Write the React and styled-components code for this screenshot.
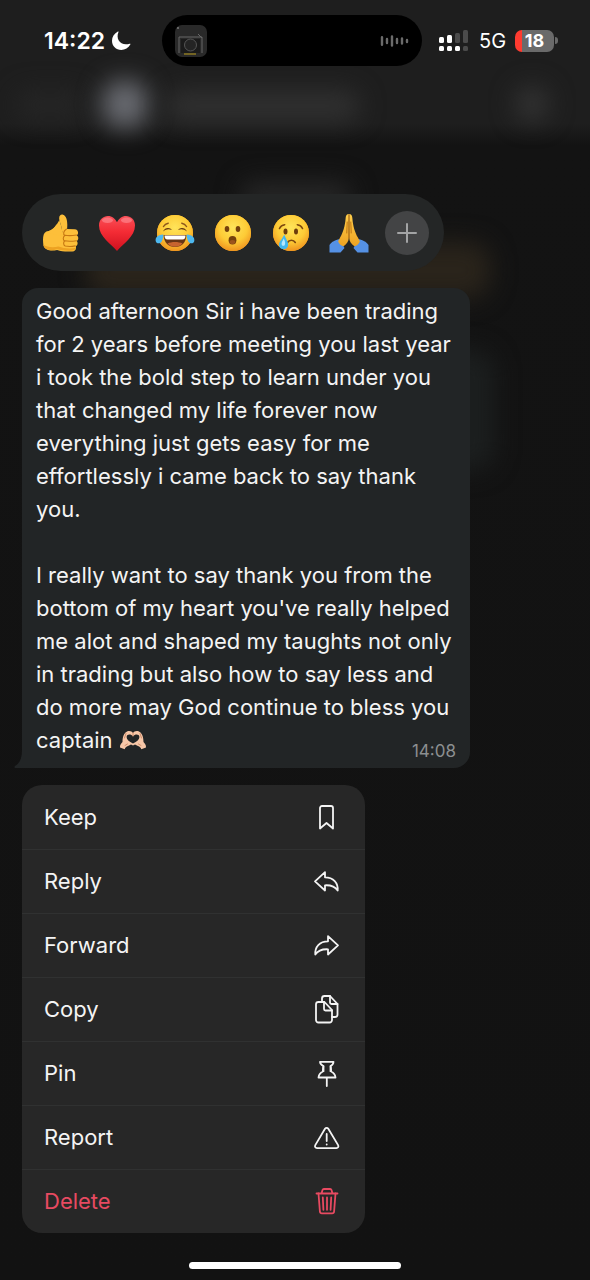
import React from "react";
import styled, { createGlobalStyle } from "styled-components";

const GlobalStyle = createGlobalStyle`
  *, *::before, *::after { box-sizing: border-box; }
  body {
    margin: 0;
    background: #121212;
    color: #f4f4f4;
    font-family: Inter, "Liberation Sans", sans-serif;
  }
  button { font: inherit; color: inherit; border: 0; padding: 0; margin: 0; background: none; cursor: pointer; }
  svg { display: block; flex: none; }
`;

const Screen = styled.div`
  position: relative;
  isolation: isolate;
  overflow: hidden;
  min-height: 100vh;
  display: flex;
  flex-direction: column;
`;

/* Dimmed, blurred chat that sits behind the open menu */
const Backdrop = styled.div`
  position: absolute;
  inset: 0;
  z-index: -1;
  background: linear-gradient(#1e1e1e 0, #1e1e1e 124px, #131313 146px, #121212 100%);
`;

const Haze = styled.span`
  position: absolute;
  left: ${(p) => p.$x}px;
  top: ${(p) => p.$y}px;
  width: ${(p) => p.$w}px;
  height: ${(p) => p.$h}px;
  border-radius: 20px;
  background: ${(p) => p.$color};
  filter: blur(12px);
`;

const StatusBar = styled.header`
  display: grid;
  grid-template-columns: 1fr 260px 1fr;
  align-items: center;
  padding: 15px 6px 0 0;
`;

const StatusLeft = styled.div`
  display: flex;
  align-items: center;
  gap: 6px;
  padding-left: 44px;
  font-size: 23px;
  line-height: 28px;
  font-weight: 600;
  color: #fff;
`;

const StatusRight = styled.div`
  display: flex;
  align-items: center;
  gap: 9px;
  padding-left: 17px;
  font-size: 20px;
  line-height: 28px;
  color: #fff;
`;

const Island = styled.div`
  height: 51px;
  display: flex;
  align-items: center;
  justify-content: space-between;
  padding: 0 13px;
  border-radius: 26px;
  background: #000;
`;

const Battery = styled.div`
  display: flex;
  align-items: center;
  gap: 1px;
`;

const BatteryBody = styled.div`
  width: 39px;
  height: 22px;
  border-radius: 7px;
  background: linear-gradient(90deg, #ff3b30 7px, #6a6a6a 7px);
  font-size: 18px;
  line-height: 22px;
  font-weight: 700;
  text-align: center;
`;

const BatteryTip = styled.div`
  width: 3px;
  height: 7px;
  border-radius: 0 3px 3px 0;
  background: #6a6a6a;
`;

const Content = styled.main`
  display: flex;
  flex-direction: column;
  align-items: flex-start;
  gap: 17px;
  padding: 128px 22px 24px;
`;

const ReactionBar = styled.div`
  display: flex;
  align-items: center;
  gap: 14px;
  height: 77px;
  padding: 0 15px;
  border-radius: 39px;
  background: #242626;
`;

const ReactionButton = styled.button`
  width: 44px;
  height: 44px;
  display: grid;
  place-items: center;
  border-radius: 50%;
  background: ${(p) => (p.$filled ? "#434445" : "none")};
`;

const Bubble = styled.article`
  position: relative;
  width: 100%;
  max-width: 448px;
  padding: 7px 14px 8px;
  border-radius: 16px 16px 16px 0;
  background: #222526;
`;

const BubbleTail = styled.svg`
  position: absolute;
  left: -8px;
  bottom: 0;
`;

const Message = styled.p`
  display: flow-root;
  margin: 0;
  font-size: 22px;
  line-height: 33px;
  white-space: pre-line;

  svg { display: inline-block; vertical-align: -2px; }
`;

const Time = styled.time`
  float: right;
  margin-top: 18px;
  font-size: 17px;
  line-height: 18px;
  color: #8c8f90;
`;

const Menu = styled.div`
  width: 100%;
  max-width: 343px;
  overflow: hidden;
  border-radius: 20px;
  background: #272727;
`;

const MenuItem = styled.button`
  width: 100%;
  height: 64px;
  display: flex;
  align-items: center;
  justify-content: space-between;
  padding: 0 24px 0 22px;
  font-size: 22px;
  line-height: 28px;
  text-align: left;
  color: ${(p) => (p.$danger ? "#e84a61" : "#f4f4f4")};

  & + & { box-shadow: inset 0 1px #303131; }
`;

const HomeIndicator = styled.div`
  width: 212px;
  height: 7px;
  margin: auto auto 11px;
  border-radius: 4px;
  background: #fff;
`;

const LineIcon = ({ children }) => (
  <svg width="30" height="30" viewBox="0 0 30 30" fill="none" stroke="currentColor" strokeWidth="1.8" strokeLinejoin="round" strokeLinecap="round" aria-hidden="true">
    {children}
  </svg>
);

const arrow = "M14 6.2 4 15.3l10 9.2v-5.2c5.500-.3 9.700.7 12.700 5.200C27.200 17 22.500 11.300 14 11.300Z";

const menuItems = [
  { label: "Keep", icon: <path d="M11 4h9a2 2 0 0 1 2 2v20.500l-6.500-5.500L9 26.500V6a2 2 0 0 1 2-2Z" /> },
  { label: "Reply", icon: <path d={arrow} /> },
  { label: "Forward", icon: <path d={arrow} transform="translate(31 0) scale(-1 1)" /> },
  {
    label: "Copy",
    icon: (
      <>
        <path d="M7.500 8h6l7.500 8V26a2.500 2.500 0 0 1-2.500 2.500h-11A2.500 2.500 0 0 1 5 26V10.500A2.500 2.500 0 0 1 7.500 8Z" />
        <path d="M13 8v7a1.500 1.500 0 0 0 1.500 1.500h6.500" />
        <path d="M11 8V4.500A2.500 2.500 0 0 1 13.500 2H19l7.500 8V20.500a2.500 2.500 0 0 1-2.500 2.500H21" />
        <path d="M19 2v6.500a1.500 1.500 0 0 0 1.500 1.500h6" />
      </>
    ),
  },
  {
    label: "Pin",
    icon: (
      <>
        <path d="M9 3.800h13.500c0 2-1 3.200-2.800 4.200l.5 5.500c2.500 1.200 4 3.200 4.300 6H7.500c.3-2.800 1.800-4.800 4.300-6L12.300 8C10.300 7 9 5.800 9 3.800Z" />
        <path d="M12.500 8.200v5M19.500 8.200v5M15.800 19.800V28" />
      </>
    ),
  },
  {
    label: "Report",
    icon: (
      <>
        <path d="M14 6.800a2 2 0 0 1 3.300 0l9.800 16.300c.8 1.500 0 3-1.700 3H6c-1.700 0-2.500-1.500-1.700-3Z" />
        <path d="M15.700 12v7M15.700 22.300v.2" />
      </>
    ),
  },
  {
    label: "Delete",
    danger: true,
    icon: (
      <>
        <path d="M5.500 7.500H26.500M10.500 7.500 11.500 4a1.500 1.500 0 0 1 1.400-1h6.200a1.500 1.500 0 0 1 1.400 1l1 3.500" />
        <path d="m7.500 7.500 1.400 18a2 2 0 0 0 2 1.800h10.200a2 2 0 0 0 2-1.800l1.400-18" />
        <path d="m11.800 11.500.6 12.300M16 11.500v12.300M20.200 11.500l-.6 12.300" />
      </>
    ),
  },
];

const Emoji = ({ children }) => (
  <svg width="40" height="40" viewBox="0 0 40 40" aria-hidden="true">{children}</svg>
);

const Face = () => (
  <>
    <circle cx="20" cy="20" r="18" fill="#f5a91c" />
    <circle cx="20" cy="20" r="18" fill="url(#faceShade)" />
  </>
);

const reactions = [
  {
    label: "Thumbs up",
    art: (
      <g transform="translate(2 0)">
        <path d="M21 20c.7-4.500-1.700-9-2.600-13-1-3.800 1.200-6 3.600-5.300 4.500 1.400 4.600 8.800 4.100 14.300l7.500.3c3.800.2 4.500 4.500 2 6 2.200 1.300 2.200 4.500.2 5.700 1.400 1.600.9 4.300-1 5.200.8 2.500-.5 5-3.500 5.200-5.300.4-10.800.2-15.200-1.500C9.500 38.500 3 37 2.300 31.500 1.700 26 1.800 20.500 5 18.800c5-.8 8.500-3 10.500-7.500Z" fill="#fdbf3a" />
        <path d="M5 18.800c6-1 10-5.300 13.400-11.800.9 4 3.300 8.500 2.600 13l-2 3Z" fill="#fdbf3a" />
        <path d="M2.300 31.500c.7 5.500 7.200 7 13.800 4.500 4.400 1.700 9.900 1.900 15.200 1.500 2-.1 3.300-1.300 3.700-2.700-6 1.300-12 .7-17.500-1.300-6 1.500-12 .5-15.200-2Z" fill="#eda222" />
        <path d="M24 22.200c3.200.7 8 .4 11.500-.2M23.800 27.800c3.600.7 8 .4 11.700-.1M24.200 33c3 .6 7 .5 10-.1M25.500 16c-3.300 2-3.500 5.500-1.700 6.500-2 1.500-2 4.500-.2 5.500-1.500 1.200-1.200 4 .5 5" fill="none" stroke="#c77812" strokeWidth="1.100" strokeLinecap="round" />
      </g>
    ),
  },
  {
    label: "Red heart",
    art: (
      <>
        <path d="M20 38C14 31 2 23.500 2 12.500 2 6.500 6.300 3 11 3c4 0 7.200 2.500 9 6.300C21.800 5.500 25 3 29 3c4.700 0 9 3.500 9 9.500C38 23.500 26 31 20 38Z" fill="url(#heartShade)" />
        <ellipse cx="10.500" cy="7.300" rx="5.500" ry="2.700" fill="#ff9096" opacity=".6" />
        <ellipse cx="29.500" cy="7.300" rx="5.500" ry="2.700" fill="#ff9096" opacity=".6" />
      </>
    ),
  },
  {
    label: "Tears of joy",
    art: (
      <>
        <Face />
        <path d="M8 18.500c2-4.500 7-4.500 9-1.500-3.500-1.300-6-.8-9 1.500ZM32 18.500c-2-4.500-7-4.500-9-1.500 3.500-1.300 6-.8 9 1.500Z" fill="#5d3210" />
        <path d="m8.500 13.500c1-1.800 2.600-3 4.700-3.300M31.500 13.500c-1-1.800-2.600-3-4.700-3.300" fill="none" stroke="#8b551b" strokeWidth="1.500" strokeLinecap="round" />
        <path d="M8.500 22h23C31 30 26.500 34 20 34S9 30 8.500 22Z" fill="#673515" />
        <path d="M9.500 22.500h21c0 2.500-1 4-3 4H12.500c-2 0-3-1.500-3-4Z" fill="#fff" />
        <path d="M12.500 30.500c4-2 11-2 15 0-4 4.300-11 4.300-15 0Z" fill="#c8642f" />
        <path d="M8.300 21.500C2.500 22 .2 24.500.7 28c.5 3 4.500 3 6 .4 1.200-2 1.600-4.800 1.600-6.900ZM31.700 21.500c5.800.5 8.100 3 7.600 6.500-.5 3-4.500 3-6 .4-1.200-2-1.600-4.800-1.600-6.900Z" fill="#4db8ef" />
      </>
    ),
  },
  {
    label: "Surprised",
    art: (
      <>
        <Face />
        <ellipse cx="14" cy="16" rx="2.300" ry="3" fill="#75400c" />
        <ellipse cx="25" cy="16" rx="2.300" ry="3" fill="#75400c" />
        <ellipse cx="19.500" cy="27.300" rx="3.900" ry="4.200" fill="#75400c" />
        <ellipse cx="19.500" cy="29" rx="2.800" ry="2" fill="#9c541d" />
      </>
    ),
  },
  {
    label: "Crying",
    art: (
      <>
        <Face />
        <ellipse cx="14.500" cy="18.500" rx="2" ry="3" fill="#6d3d0c" />
        <ellipse cx="25" cy="18.500" rx="2" ry="3" fill="#6d3d0c" />
        <path d="M8.500 15.500c1-2.200 2.700-3.500 5.200-3.800M31.500 15.500c-1-2.200-2.700-3.500-5.200-3.800M16.500 29.500c1.800-3 6-3 7.800 0" fill="none" stroke="#7c470f" strokeWidth="1.600" strokeLinecap="round" />
        <path d="M13.200 21.500c1.500 4 4 7 4 10 0 3-2 4.700-4.700 4.700S8 34.300 8 31.500c0-3 3.700-6 5.200-10Z" fill="#45b8ef" />
        <path d="M12.700 25.500c1.500 3 2 5 .8 7-1.700 1-3-.2-2.900-2 .1-1.600 1.600-3.300 2.100-5Z" fill="#b5e8ff" />
      </>
    ),
  },
  {
    label: "Folded hands",
    art: (
      <>
        <path d="M.5 32c2.500-3.700 5.500-4.500 10-6l5 9-4 4.500H.5ZM39.500 32c-2.500-3.700-5.500-4.500-10-6l-5 9 4 4.500h11Z" fill="#5591e5" />
        <path d="M19.800 1c-2.500-.3-3 2-3.200 4.500-.5 7-2.600 14.500-5.500 19l-2 4c1.500 3 3.500 4.500 5.500 4.800 3-2.300 5.200-5 5.200-8.800Z" fill="url(#handShade)" />
        <path d="M20.200 1c2.500-.3 3 2 3.200 4.500.5 7 2.600 14.500 5.500 19l2 4c-1.500 3-3.500 4.500-5.500 4.800-3-2.300-5.200-5-5.200-8.800Z" fill="url(#handShade)" />
        <path d="M20 1.800v23M18.200 9 17.800 20M21.800 9l.4 11" fill="none" stroke="#b66a0d" strokeWidth=".9" strokeLinecap="round" />
      </>
    ),
  },
];

const HeartHands = () => (
  <svg width="28" height="20" viewBox="0 0 28 20" role="img" aria-label="Heart hands">
    <path d="M1 17.500C.8 15 2 13.500 3.500 12 3.500 7 5 2.500 8.500 1.200c2.500-.8 4.500.3 5.500 1.800 1-1.500 3-2.600 5.500-1.800C23 2.500 24.500 7 24.500 12c1.500 1.500 2.700 3 2.500 5.500l-4.700 1.700c-.6-1.600-1.600-2.800-3.300-3.200l-3-1.500-2 1-2-1L9 16c-1.700.4-2.700 1.600-3.300 3.200Z" fill="#f7c7a8" />
    <path d="M14 13.500C10 11.500 7.500 9.500 7.600 7c.2-3 4.400-3.200 6.400-.5 2-2.700 6.200-2.500 6.400.5.1 2.500-2.400 4.500-6.400 6.500Z" fill="#222526" />
    <path d="M14 3v3M7 3.500 5.500 8M21 3.500 22.500 8M8.500 14 6 15.500M19.500 14 22 15.500" fill="none" stroke="#c78562" strokeWidth=".9" strokeLinecap="round" />
  </svg>
);

const Gradients = () => (
  <defs>
    <radialGradient id="faceShade" cx=".5" cy=".35" r=".65">
      <stop offset="0" stopColor="#ffe45a" />
      <stop offset=".6" stopColor="#fdcb36" />
      <stop offset="1" stopColor="#ef9420" />
    </radialGradient>
    <linearGradient id="handShade" x1="0" y1="0" x2="0" y2="1">
      <stop offset="0" stopColor="#ffce4b" />
      <stop offset="1" stopColor="#eda222" />
    </linearGradient>
    <linearGradient id="heartShade" x1="0" y1="0" x2="0" y2="1">
      <stop offset="0" stopColor="#f95058" />
      <stop offset=".45" stopColor="#f42c35" />
      <stop offset="1" stopColor="#cf101e" />
    </linearGradient>
  </defs>
);

const AlbumArt = () => (
  <svg width="32" height="32" viewBox="0 0 32 32" aria-hidden="true">
    <rect width="32" height="32" rx="7" fill="#292929" />
    <path d="M4 28V12h23v16M23 9l4 4" fill="none" stroke="#686868" strokeWidth="1" />
    <rect x="6" y="14" width="19" height="14" fill="#1b1b1b" />
    <circle cx="15.500" cy="20" r="6" fill="#242424" stroke="#555" />
    <path d="M9 29h12" stroke="#8c7922" strokeWidth="1.500" />
    <circle cx="3" cy="3" r="1" fill="#777" />
  </svg>
);

const Waveform = () => (
  <svg width="29" height="12" viewBox="0 0 29 12" stroke="#6b6b6b" strokeWidth="2.400" strokeLinecap="round" aria-hidden="true">
    <path d="M2 2.200v7.600M7 4v4M12 1.500v9M17 4v4M22 3.500v5M27 5v2" />
  </svg>
);

const Signal = () => (
  <svg width="31" height="22" viewBox="0 0 31 22" fill="#fff" aria-hidden="true">
    <rect x="0" y="7" width="5" height="6" rx="1.500" />
    <rect x="8" y="5" width="5" height="8" rx="1.500" />
    <rect x="16" y="3" width="5" height="10" rx="1.500" fill="#4b4b4b" />
    <rect x="24" y="0" width="5" height="13" rx="1.500" fill="#4b4b4b" />
    <rect x="0" y="16" width="5" height="5" rx="1.500" />
    <rect x="8" y="16" width="5" height="5" rx="1.500" />
    <rect x="16" y="16" width="5" height="5" rx="1.500" />
    <rect x="24" y="16" width="5" height="5" rx="1.500" fill="#4b4b4b" />
  </svg>
);

const haze = [
  { x: 15, y: 90, w: 70, h: 30, color: "#252525" },
  { x: 102, y: 80, w: 46, h: 48, color: "#696b71" },
  { x: 165, y: 90, w: 195, h: 32, color: "#303030" },
  { x: 515, y: 86, w: 34, h: 36, color: "#333333" },
  { x: 240, y: 182, w: 112, h: 30, color: "#272727" },
  { x: 86, y: 242, w: 404, h: 56, color: "#2a241b" },
  { x: 400, y: 350, w: 94, h: 120, color: "#1c1f1f" },
];

const message = `Good afternoon Sir i have been trading
for 2 years before meeting you last year
i took the bold step to learn under you
that changed my life forever now
everything just gets easy for me
effortlessly i came back to say thank
you.

I really want to say thank you from the
bottom of my heart you've really helped
me alot and shaped my taughts not only
in trading but also how to say less and
do more may God continue to bless you
captain `;

export default function App() {
  return (
    <Screen>
      <GlobalStyle />
      <Backdrop aria-hidden="true">
        {haze.map((h) => (
          <Haze key={`${h.x}-${h.y}`} $x={h.x} $y={h.y} $w={h.w} $h={h.h} $color={h.color} />
        ))}
        <svg width="0" height="0"><Gradients /></svg>
      </Backdrop>

      <StatusBar>
        <StatusLeft>
          <span>14:22</span>
          <svg width="20" height="20" viewBox="0 0 20 20" fill="#fff" aria-hidden="true">
            <path d="M7.500 1C4.300 8.500 10 15.500 18.700 12.700c.7-.2 1 .3.6.9C17.500 17 14 19 10.300 19 5 19 1 15 1 9.800 1 6 3.200 2.600 6.500.8c.7-.4 1.300-.2 1 .2Z" />
          </svg>
        </StatusLeft>
        <Island>
          <AlbumArt />
          <Waveform />
        </Island>
        <StatusRight>
          <Signal />
          <span>5G</span>
          <Battery>
            <BatteryBody>18</BatteryBody>
            <BatteryTip />
          </Battery>
        </StatusRight>
      </StatusBar>

      <Content>
        <ReactionBar role="group" aria-label="Reactions">
          {reactions.map((r) => (
            <ReactionButton key={r.label} type="button" aria-label={r.label}>
              <Emoji>{r.art}</Emoji>
            </ReactionButton>
          ))}
          <ReactionButton type="button" $filled aria-label="More reactions">
            <svg width="20" height="20" viewBox="0 0 20 20" stroke="#a3a4a5" strokeWidth="2" strokeLinecap="round" aria-hidden="true">
              <path d="M10 1v18M1 10h18" />
            </svg>
          </ReactionButton>
        </ReactionBar>

        <Bubble>
          <BubbleTail width="22" height="18" viewBox="0 0 22 18" aria-hidden="true">
            <path d="M8 0c0 8-2 13-7 16-1 .8-.5 2 1 2h20V0Z" fill="#222526" />
          </BubbleTail>
          <Message>
            {message}
            <HeartHands />
            <Time dateTime="14:08">14:08</Time>
          </Message>
        </Bubble>

        <Menu role="menu" aria-label="Message actions">
          {menuItems.map((item) => (
            <MenuItem key={item.label} type="button" role="menuitem" $danger={item.danger}>
              {item.label}
              <LineIcon>{item.icon}</LineIcon>
            </MenuItem>
          ))}
        </Menu>
      </Content>

      <HomeIndicator />
    </Screen>
  );
}
